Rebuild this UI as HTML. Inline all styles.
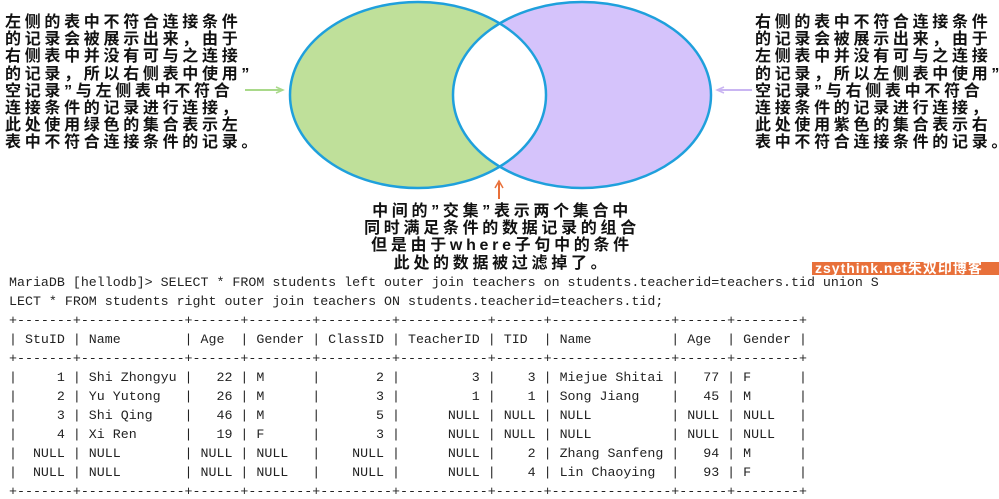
<!DOCTYPE html>
<html><head><meta charset="utf-8"><style>
html,body{margin:0;padding:0;background:#fff;width:999px;height:499px;overflow:hidden;position:relative}
.cn{position:absolute;font-family:"Liberation Sans","Noto Sans CJK SC",sans-serif;font-size:16px;line-height:17.2px;letter-spacing:3.7px;color:#111;font-weight:bold;white-space:pre}
pre{position:absolute;left:9px;top:273px;margin:0;font-family:"Liberation Mono",monospace;font-size:13.3px;line-height:19px;color:#222}
.wm{position:absolute;left:812px;top:262px;width:190px;height:13px;background:#e8703a;color:#fff;font:bold 14px/13px "Liberation Sans","Noto Sans CJK SC",sans-serif;letter-spacing:1px;white-space:nowrap;overflow:hidden;padding-left:3px}
</style></head><body>
<svg width="999" height="270" style="position:absolute;left:0;top:0">
<defs><clipPath id="c"><ellipse cx="582" cy="95" rx="129" ry="93"/></clipPath></defs>
<ellipse cx="418" cy="95" rx="128" ry="93" fill="#bfe09a"/>
<ellipse cx="582" cy="95" rx="129" ry="93" fill="#d5c3fb"/>
<ellipse cx="418" cy="95" rx="128" ry="93" fill="#fff" clip-path="url(#c)"/>
<ellipse cx="418" cy="95" rx="128" ry="93" fill="none" stroke="#1fa0dc" stroke-width="2.5"/>
<ellipse cx="582" cy="95" rx="129" ry="93" fill="none" stroke="#1fa0dc" stroke-width="2.5"/>
<line x1="245" y1="90" x2="282" y2="90" stroke="#a9d98a" stroke-width="2"/>
<path d="M276 87 L283 90 L276 93" fill="none" stroke="#a9d98a" stroke-width="1.5"/>
<line x1="719" y1="90" x2="752" y2="90" stroke="#c9b5f2" stroke-width="2"/>
<path d="M724 87 L717 90 L724 93" fill="none" stroke="#c9b5f2" stroke-width="1.5"/>
<line x1="499" y1="183" x2="499" y2="199" stroke="#e8703a" stroke-width="2"/>
<path d="M495 188 L499 181 L503 188" fill="none" stroke="#e8703a" stroke-width="1.5"/>
</svg>
<div class="cn" style="left:5px;top:14px">左侧的表中不符合连接条件
的记录会被展示出来，由于
右侧表中并没有可与之连接
的记录，所以右侧表中使用”
空记录”与左侧表中不符合
连接条件的记录进行连接，
此处使用绿色的集合表示左
表中不符合连接条件的记录。</div>
<div class="cn" style="left:755px;top:14px">右侧的表中不符合连接条件
的记录会被展示出来，由于
左侧表中并没有可与之连接
的记录，所以左侧表中使用”
空记录”与右侧表中不符合
连接条件的记录进行连接，
此处使用紫色的集合表示右
表中不符合连接条件的记录。</div>
<div class="cn" style="left:362px;top:203px;width:280px;text-align:center">中间的”交集”表示两个集合中
同时满足条件的数据记录的组合
但是由于where子句中的条件
此处的数据被过滤掉了。</div>
<div class="wm">zsythink.net朱双印博客</div>
<pre>MariaDB [hellodb]&gt; SELECT * FROM students left outer join teachers on students.teacherid=teachers.tid union S
LECT * FROM students right outer join teachers ON students.teacherid=teachers.tid;
+-------+-------------+------+--------+---------+-----------+------+---------------+------+--------+
| StuID | Name        | Age  | Gender | ClassID | TeacherID | TID  | Name          | Age  | Gender |
+-------+-------------+------+--------+---------+-----------+------+---------------+------+--------+
|     1 | Shi Zhongyu |   22 | M      |       2 |         3 |    3 | Miejue Shitai |   77 | F      |
|     2 | Yu Yutong   |   26 | M      |       3 |         1 |    1 | Song Jiang    |   45 | M      |
|     3 | Shi Qing    |   46 | M      |       5 |      NULL | NULL | NULL          | NULL | NULL   |
|     4 | Xi Ren      |   19 | F      |       3 |      NULL | NULL | NULL          | NULL | NULL   |
|  NULL | NULL        | NULL | NULL   |    NULL |      NULL |    2 | Zhang Sanfeng |   94 | M      |
|  NULL | NULL        | NULL | NULL   |    NULL |      NULL |    4 | Lin Chaoying  |   93 | F      |
+-------+-------------+------+--------+---------+-----------+------+---------------+------+--------+</pre>
</body></html>
